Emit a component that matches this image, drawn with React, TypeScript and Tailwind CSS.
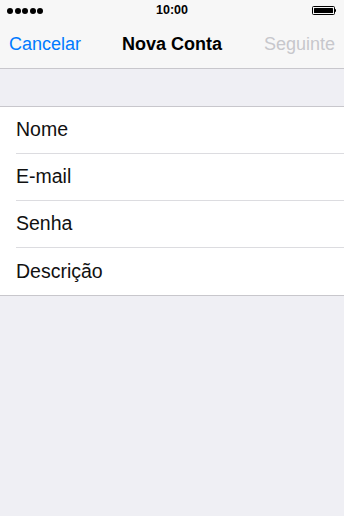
export default function App() {
  const rows = ["Nome", "E-mail", "Senha", "Descrição"];
  return (
    <div
      className="w-[344px] h-[516px] bg-[#efeff4] flex flex-col overflow-hidden"
      style={{ fontFamily: '"Liberation Sans", Arial, sans-serif' }}
    >
      <div className="bg-[#f7f7f7] border-b border-[#c8c7cc]">
        <div className="h-[21px] relative flex items-center justify-between px-[7px]">
          <div className="flex gap-[1.5px]">
            {[0, 1, 2, 3, 4].map((i) => (
              <div key={i} className="w-[6px] h-[6px] rounded-full bg-black" />
            ))}
          </div>
          <div className="absolute left-0 right-0 text-center text-[12.5px] font-bold text-black leading-none">
            10:00
          </div>
          <div className="flex items-center mr-[1px]">
            <div className="w-[23px] h-[9px] border border-black rounded-[1.5px] p-[1px]">
              <div className="w-full h-full bg-black rounded-[0.5px]" />
            </div>
            <div className="w-[1.5px] h-[3.5px] bg-black rounded-r-[1px]" />
          </div>
        </div>
        <div className="h-[47px] relative flex items-center justify-between px-[9px]">
          <span className="text-[18px] text-[#007aff]">Cancelar</span>
          <span className="absolute left-0 right-0 text-center text-[18px] font-bold text-black pointer-events-none">
            Nova Conta
          </span>
          <span className="text-[18px] text-[#c7c7cc]">Seguinte</span>
        </div>
      </div>
      <div className="h-[37px]" />
      <div className="bg-white border-t border-b border-[#c8c7cc]">
        {rows.map((r, i) => (
          <div key={r} className="pl-[16px]">
            <div
              className={
                "h-[47px] flex items-center text-[19.5px] text-[#111111] " +
                (i < rows.length - 1 ? "border-b border-[#dcdce0]" : "")
              }
            >
              {r}
            </div>
          </div>
        ))}
      </div>
    </div>
  );
}
